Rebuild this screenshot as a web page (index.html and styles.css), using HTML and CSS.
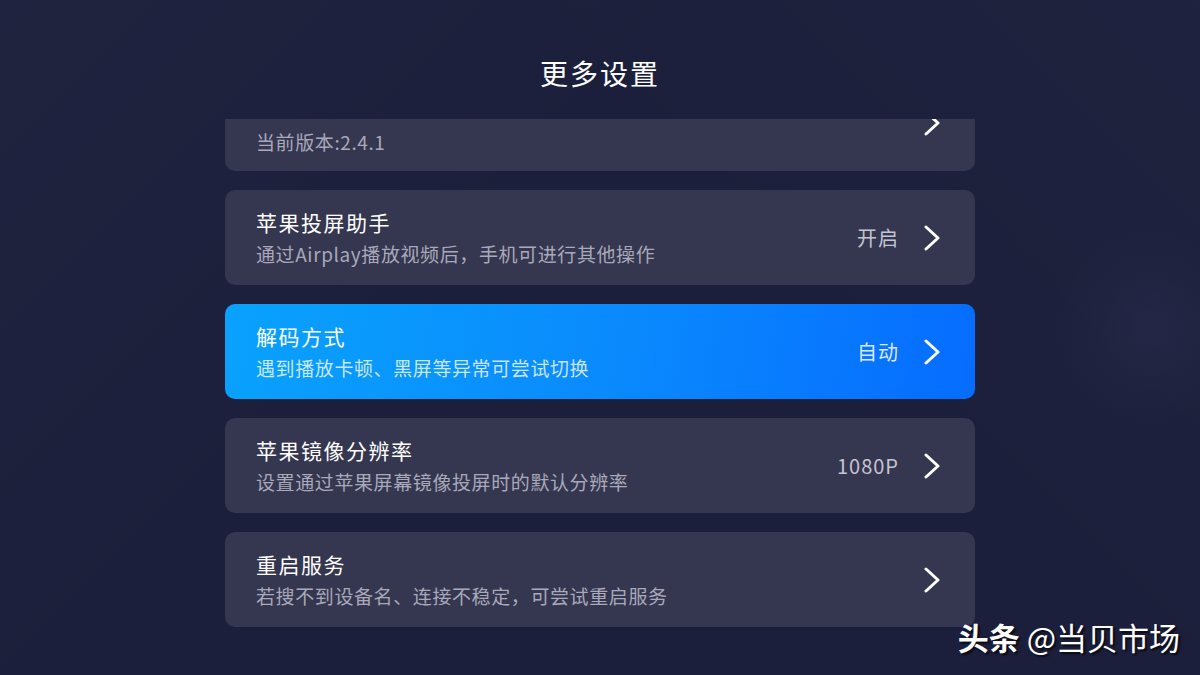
FILE: index.html
```html
<!DOCTYPE html>
<html>
    <head>
        <title>更多设置</title>
        <link rel="stylesheet" href="styles.css">
    </head>
    <body>

        <!-- Page title -->
        <div class="header">更多设置</div>

        <!-- Settings list, scrolled a little -->
        <div class="viewport">
            <div class="list">
                <!-- first row is scrolled half out of view, only its second line shows -->
                <div class="item first">
                    <div class="text">
                        <div class="desc">当前版本:2.4.1</div>
                    </div>
                    <div class="side">
                        <svg class="chevron" viewBox="0 0 18 26"><polyline points="3,2 15,13 3,24" /></svg>
                    </div>
                </div>

                <div class="item">
                    <div class="text">
                        <div class="name">苹果投屏助手</div>
                        <div class="desc">通过Airplay播放视频后，手机可进行其他操作</div>
                    </div>
                    <div class="side">
                        <span class="value">开启</span>
                        <svg class="chevron" viewBox="0 0 18 26"><polyline points="3,2 15,13 3,24" /></svg>
                    </div>
                </div>

                <div class="item active">
                    <div class="text">
                        <div class="name">解码方式</div>
                        <div class="desc">遇到播放卡顿、黑屏等异常可尝试切换</div>
                    </div>
                    <div class="side">
                        <span class="value">自动</span>
                        <svg class="chevron" viewBox="0 0 18 26"><polyline points="3,2 15,13 3,24" /></svg>
                    </div>
                </div>

                <div class="item">
                    <div class="text">
                        <div class="name">苹果镜像分辨率</div>
                        <div class="desc">设置通过苹果屏幕镜像投屏时的默认分辨率</div>
                    </div>
                    <div class="side">
                        <span class="value">1080P</span>
                        <svg class="chevron" viewBox="0 0 18 26"><polyline points="3,2 15,13 3,24" /></svg>
                    </div>
                </div>

                <div class="item">
                    <div class="text">
                        <div class="name">重启服务</div>
                        <div class="desc">若搜不到设备名、连接不稳定，可尝试重启服务</div>
                    </div>
                    <div class="side">
                        <svg class="chevron" viewBox="0 0 18 26"><polyline points="3,2 15,13 3,24" /></svg>
                    </div>
                </div>
            </div>
        </div>

        <!-- Watermark -->
        <div class="watermark"><b>头条</b> @当贝市场</div>

    </body>
</html>
```

FILE: styles.css
```css
/* Whole page */
body {
margin: 0;
padding: 0;
height: 675px;
overflow: hidden;
position: relative;
font-family: "Noto Sans CJK SC", "Noto Sans", sans-serif;
color: #fff;
background-color: #1c1f3b;
background-image:
    radial-gradient(circle at 1150px 330px, rgba(44, 48, 82, 0.4) 0, rgba(44, 48, 82, 0) 100px),
    linear-gradient(135deg, rgba(255, 255, 255, 0.02) 0%, rgba(255, 255, 255, 0) 40%),
    linear-gradient(45deg, rgba(255, 255, 255, 0) 60%, rgba(255, 255, 255, 0.015) 100%);
}

/* Title */
.header {
height: 119px;
box-sizing: border-box;
padding-top: 50px;
text-align: center;
font-size: 28px;
line-height: 46px;
letter-spacing: 2px;
}

/* Scroll area */
.viewport {
width: 750px;
height: 520px;
margin: 0 auto;
overflow: hidden;
}

.list {
display: flex;
flex-direction: column;
gap: 19px;
margin-top: -43px;
}

/* One row */
.item {
height: 95px;
box-sizing: border-box;
padding: 0 34px 0 31px;
display: flex;
align-items: center;
justify-content: space-between;
background-color: #35364f;
border-radius: 10px;
}

.item.first {
align-items: flex-start;
}

.item.first .text {
padding-top: 52px;
}

.item.first .side {
padding-top: 34px;
}

.item.active {
background-image: linear-gradient(100deg, #09a2fd 0%, #0a8bfd 50%, #066cff 100%);
}

.name {
font-size: 21px;
line-height: 30px;
letter-spacing: 1.5px;
}

.desc {
margin-top: 3px;
font-size: 19px;
line-height: 28px;
letter-spacing: 0.6px;
color: #a8a9ba;
}

.first .desc {
margin-top: 0;
}

.active .desc {
color: rgba(255, 255, 255, 0.78);
}

.side {
display: flex;
align-items: center;
gap: 24px;
}

.value {
font-size: 20px;
color: #c4c5d1;
letter-spacing: 1px;
}

.active .value {
color: rgba(255, 255, 255, 0.85);
}

.chevron {
width: 18px;
height: 26px;
}

.chevron polyline {
fill: none;
stroke: #fff;
stroke-width: 3;
stroke-linecap: round;
stroke-linejoin: round;
}

/* Watermark in the corner */
.watermark {
position: absolute;
right: 20px;
bottom: 18px;
font-size: 31px;
line-height: 40px;
color: #fff;
text-shadow: 2px 2px 2px rgba(0, 0, 0, 0.7);
}

.watermark b {
font-weight: 700;
}
```
